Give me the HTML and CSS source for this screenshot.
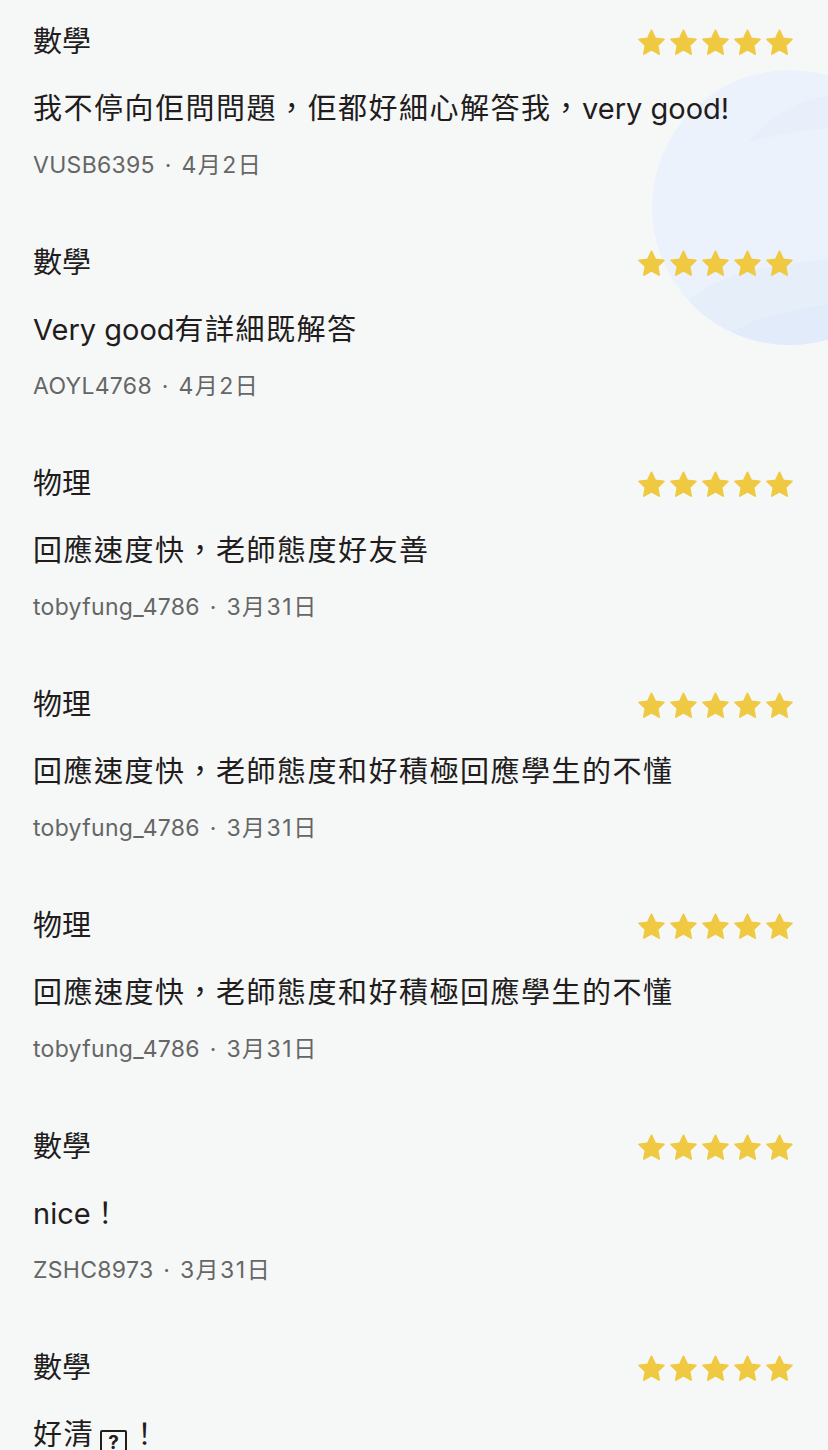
FILE: index.html
```html
<!DOCTYPE html>
<html lang="zh-Hant">
<head>
<meta charset="utf-8">
<link rel="stylesheet" href="styles.css">
</head>
<body>
<div class="page">
  <svg class="deco" width="275" height="275" viewBox="0 0 275 275" aria-hidden="true">
    <defs><clipPath id="cc"><circle cx="137.5" cy="137.5" r="137.5"/></clipPath></defs>
    <g clip-path="url(#cc)">
      <rect width="275" height="275" fill="#ecf2fb"/>
      <path d="M150 32 Q175 22 280 20 L280 52 Q160 54 95 73 Q120 45 150 32 Z" fill="#e8effa"/>
      <path d="M35 232 Q80 185 280 186 L280 280 L0 280 Z" fill="#e6eefa"/>
      <path d="M80 262 Q130 230 280 228 L280 280 L60 280 Z" fill="#e1ebf9"/>
    </g>
  </svg>

  <div class="review">
    <div class="head"><span class="subject">數學</span><span class="stars"></span></div>
    <div class="body">我不停向佢問問題，佢都好細心解答我，<span class="lat">very good!</span></div>
    <div class="meta">VUSB6395 · <span class="date">4月2日</span></div>
  </div>
  <div class="review">
    <div class="head"><span class="subject">數學</span><span class="stars"></span></div>
    <div class="body"><span class="lat">Very good</span>有詳細既解答</div>
    <div class="meta">AOYL4768 · <span class="date">4月2日</span></div>
  </div>
  <div class="review">
    <div class="head"><span class="subject">物理</span><span class="stars"></span></div>
    <div class="body">回應速度快，老師態度好友善</div>
    <div class="meta">tobyfung_4786 · <span class="date">3月31日</span></div>
  </div>
  <div class="review">
    <div class="head"><span class="subject">物理</span><span class="stars"></span></div>
    <div class="body">回應速度快，老師態度和好積極回應學生的不懂</div>
    <div class="meta">tobyfung_4786 · <span class="date">3月31日</span></div>
  </div>
  <div class="review">
    <div class="head"><span class="subject">物理</span><span class="stars"></span></div>
    <div class="body">回應速度快，老師態度和好積極回應學生的不懂</div>
    <div class="meta">tobyfung_4786 · <span class="date">3月31日</span></div>
  </div>
  <div class="review">
    <div class="head"><span class="subject">數學</span><span class="stars"></span></div>
    <div class="body"><span class="lat">nice</span>！</div>
    <div class="meta">ZSHC8973 · <span class="date">3月31日</span></div>
  </div>
  <div class="review">
    <div class="head"><span class="subject">數學</span><span class="stars"></span></div>
    <div class="body">好清<span class="tofu">?</span>！</div>
    <div class="meta">ZSHC8973 · <span class="date">3月31日</span></div>
  </div>
</div>
<script>
  var star = '<svg class="star" width="27" height="27" viewBox="1.9 1.9 20.2 20.2"><path d="M12 2.9l2.8 5.95 6.45.85-4.7 4.5 1.2 6.45L12 17.5l-5.75 3.15 1.2-6.45-4.7-4.5 6.45-.85z" fill="#f0c942" stroke="#f0c942" stroke-width="1.3" stroke-linejoin="round"/></svg>';
  document.querySelectorAll('.stars').forEach(function (s) {
    s.innerHTML = star + star + star + star + star;
  });
</script>
</body>
</html>
```

FILE: styles.css
```css
html, body {
  margin: 0;
  padding: 0;
  background: #f6f8f8;
}

body {
  font-family: "Inter", "Noto Sans CJK TC", sans-serif;
  color: #221c1c;
  overflow: hidden;
}

.page {
  position: relative;
  width: 828px;
  height: 1450px;
  overflow: hidden;
}

.deco {
  position: absolute;
  left: 652px;
  top: 70px;
  z-index: 0;
}

.review {
  position: relative;
  z-index: 1;
  padding: 22px 35px 41px 33px;
}

.head {
  display: flex;
  justify-content: space-between;
  align-items: center;
  height: 40px;
}

.subject {
  font-size: 29px;
  line-height: 40px;
}

.stars {
  display: flex;
  gap: 5px;
}

.star {
  display: block;
}

.body {
  margin-top: 27px;
  font-size: 29px;
  line-height: 40px;
  letter-spacing: 1.5px;
  white-space: nowrap;
}

.lat {
  letter-spacing: 0;
}

.meta {
  margin-top: 21px;
  font-size: 23px;
  line-height: 30px;
  color: #666666;
  letter-spacing: 0.3px;
  word-spacing: 3px;
}

.date {
  letter-spacing: 1.5px;
}

.tofu {
  display: inline-block;
  box-sizing: border-box;
  width: 27px;
  height: 27px;
  margin: 15px 3px 0 6px;
  border: 2.5px solid #221c1c;
  border-radius: 2px;
  font-size: 19px;
  font-weight: 700;
  line-height: 21px;
  letter-spacing: 0;
  text-align: center;
  vertical-align: top;
}
```
